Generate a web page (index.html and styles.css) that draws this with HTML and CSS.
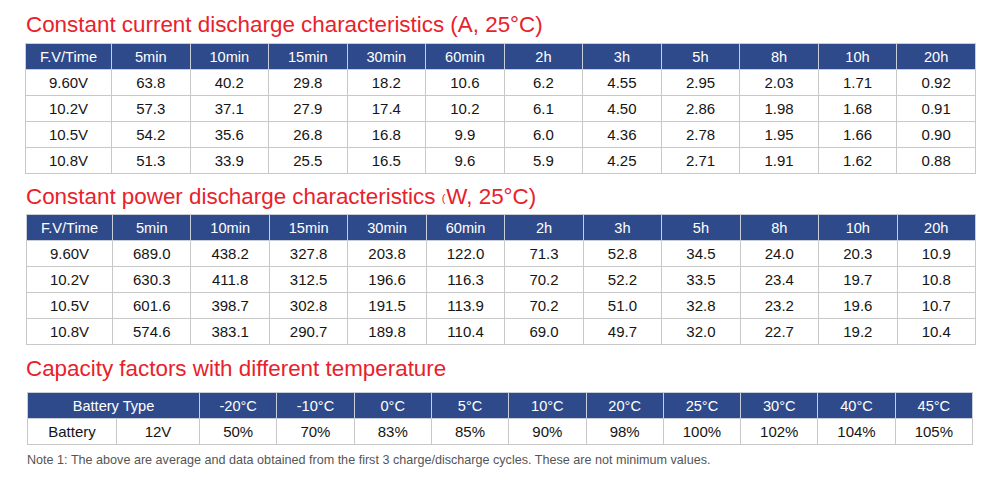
FILE: index.html
```html
<!DOCTYPE html>
<html>
<head>
<meta charset="utf-8">
<link rel="stylesheet" href="styles.css">
</head>
<body>
<div class="page">
  <h2 class="title t1">Constant current discharge characteristics (A, 25°C)</h2>
  <table class="grid g1">
    <colgroup><col class="c-first"><col span="11"></colgroup>
    <thead>
      <tr><th>F.V/Time</th><th>5min</th><th>10min</th><th>15min</th><th>30min</th><th>60min</th><th>2h</th><th>3h</th><th>5h</th><th>8h</th><th>10h</th><th>20h</th></tr>
    </thead>
    <tbody>
      <tr><td>9.60V</td><td>63.8</td><td>40.2</td><td>29.8</td><td>18.2</td><td>10.6</td><td>6.2</td><td>4.55</td><td>2.95</td><td>2.03</td><td>1.71</td><td>0.92</td></tr>
      <tr><td>10.2V</td><td>57.3</td><td>37.1</td><td>27.9</td><td>17.4</td><td>10.2</td><td>6.1</td><td>4.50</td><td>2.86</td><td>1.98</td><td>1.68</td><td>0.91</td></tr>
      <tr><td>10.5V</td><td>54.2</td><td>35.6</td><td>26.8</td><td>16.8</td><td>9.9</td><td>6.0</td><td>4.36</td><td>2.78</td><td>1.95</td><td>1.66</td><td>0.90</td></tr>
      <tr><td>10.8V</td><td>51.3</td><td>33.9</td><td>25.5</td><td>16.5</td><td>9.6</td><td>5.9</td><td>4.25</td><td>2.71</td><td>1.91</td><td>1.62</td><td>0.88</td></tr>
    </tbody>
  </table>

  <h2 class="title t2">Constant power discharge characteristics <span class="paren">(</span>W, 25°C)</h2>
  <table class="grid g2">
    <colgroup><col class="c-first"><col span="11"></colgroup>
    <thead>
      <tr><th>F.V/Time</th><th>5min</th><th>10min</th><th>15min</th><th>30min</th><th>60min</th><th>2h</th><th>3h</th><th>5h</th><th>8h</th><th>10h</th><th>20h</th></tr>
    </thead>
    <tbody>
      <tr><td>9.60V</td><td>689.0</td><td>438.2</td><td>327.8</td><td>203.8</td><td>122.0</td><td>71.3</td><td>52.8</td><td>34.5</td><td>24.0</td><td>20.3</td><td>10.9</td></tr>
      <tr><td>10.2V</td><td>630.3</td><td>411.8</td><td>312.5</td><td>196.6</td><td>116.3</td><td>70.2</td><td>52.2</td><td>33.5</td><td>23.4</td><td>19.7</td><td>10.8</td></tr>
      <tr><td>10.5V</td><td>601.6</td><td>398.7</td><td>302.8</td><td>191.5</td><td>113.9</td><td>70.2</td><td>51.0</td><td>32.8</td><td>23.2</td><td>19.6</td><td>10.7</td></tr>
      <tr><td>10.8V</td><td>574.6</td><td>383.1</td><td>290.7</td><td>189.8</td><td>110.4</td><td>69.0</td><td>49.7</td><td>32.0</td><td>22.7</td><td>19.2</td><td>10.4</td></tr>
    </tbody>
  </table>

  <h2 class="title t3">Capacity factors with different temperature</h2>
  <table class="grid g3">
    <colgroup><col class="c-bat"><col class="c-volt"><col span="10"></colgroup>
    <thead>
      <tr><th colspan="2">Battery Type</th><th>-20°C</th><th>-10°C</th><th>0°C</th><th>5°C</th><th>10°C</th><th>20°C</th><th>25°C</th><th>30°C</th><th>40°C</th><th>45°C</th></tr>
    </thead>
    <tbody>
      <tr><td>Battery</td><td>12V</td><td>50%</td><td>70%</td><td>83%</td><td>85%</td><td>90%</td><td>98%</td><td>100%</td><td>102%</td><td>104%</td><td>105%</td></tr>
    </tbody>
  </table>

  <p class="note">Note 1: The above are average and data obtained from the first 3 charge/discharge cycles. These are not minimum values.</p>
</div>
</body>
</html>
```

FILE: styles.css
```css
html, body {
  margin: 0;
  padding: 0;
  background: #ffffff;
}

body {
  font-family: "Liberation Sans", Arial, sans-serif;
  color: #151515;
}

.page {
  padding: 12px 0 0 25px;
}

.title {
  margin: 0;
  height: 26px;
  line-height: 26px;
  font-size: 22.4px;
  font-weight: normal;
  color: #e8212b;
  padding-left: 1px;
  white-space: nowrap;
}

.paren {
  font-size: 11px;
  vertical-align: 2px;
  margin-right: 1px;
}

.t2 { margin-top: 10px; }
.t3 { margin-top: 11px; }

.grid {
  border-collapse: collapse;
  table-layout: fixed;
  border: 1px solid #c8c8c8;
  font-size: 15px;
}

.g1 {
  width: 951px;
  margin-top: 5px;
}

.g2 {
  width: 950px;
  margin-top: 4px;
  margin-left: 1px;
}

.g3 {
  width: 946px;
  margin-top: 10px;
  margin-left: 2px;
}

.c-first { width: 86px; }
.c-bat { width: 89px; }
.c-volt { width: 83px; }

.grid th,
.grid td {
  height: 25px;
  padding: 0;
  text-align: center;
  vertical-align: middle;
  border: 1px solid #c8c8c8;
}

.grid th {
  background: #2f4a8a;
  color: #ffffff;
  font-weight: normal;
  font-size: 14.6px;
  border-color: #c9cdd8;
}

.grid td {
  background: #ffffff;
  color: #151515;
}

.note {
  margin: 7px 0 0 2px;
  font-size: 12.6px;
  line-height: 16px;
  color: #555555;
}
```
